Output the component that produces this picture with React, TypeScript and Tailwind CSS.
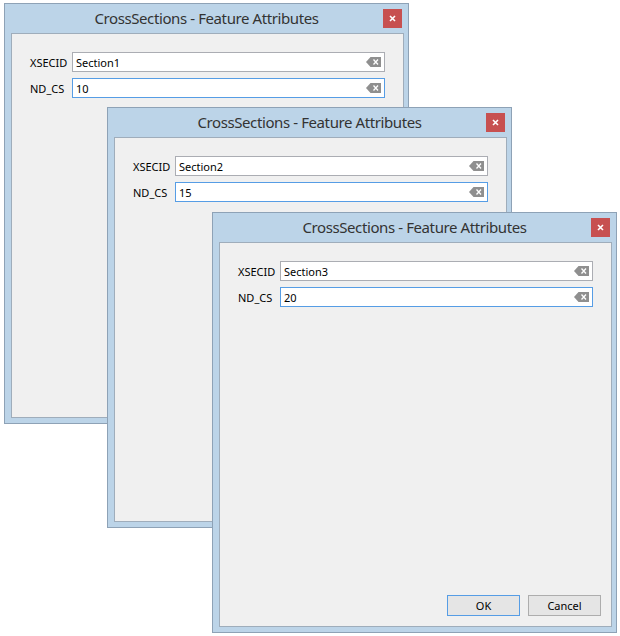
import React from "react";

const font = { fontFamily: '"Noto Sans", "Open Sans", sans-serif' };

function ClearIcon() {
  return (
    <svg width="15" height="10" viewBox="0 0 15 10" className="shrink-0">
      <path d="M4.5 0 H15 V10 H4.5 L0 5 Z" fill="#8f8f8f" />
      <path d="M7.5 2.5 L12 7.5 M12 2.5 L7.5 7.5" stroke="#ffffff" strokeWidth="1.3" />
    </svg>
  );
}

function Field({ label, value, focused }: { label: string; value: string; focused?: boolean }) {
  return (
    <>
      <div className="text-[11px] text-black leading-none">{label}</div>
      <div
        className={
          "h-[20px] bg-white border flex items-center justify-between pl-[3px] pr-[3px] " +
          (focused ? "border-[#569de5]" : "border-[#abadb3]")
        }
      >
        <span className="text-[11px] text-black leading-none">{value}</span>
        <ClearIcon />
      </div>
    </>
  );
}

function Dialog({ pos, section, nd }: { pos: string; section: string; nd: string }) {
  return (
    <div
      className={
        "absolute w-[405px] h-[421px] flex flex-col border border-[#8ea2b6] bg-[#bcd4e8] pl-[6px] pr-[4px] pb-[5px] " +
        pos
      }
      style={font}
    >
      <div className="relative h-[29px] flex items-center justify-center">
        <span className="text-[15px] tracking-[-0.4px] text-[#333333] leading-none pr-[2px]">
          CrossSections - Feature Attributes
        </span>
        <div className="absolute right-[2px] top-[5px] w-[19px] h-[19px] bg-[#c75050] flex items-center justify-center">
          <svg width="7" height="7" viewBox="0 0 7 7">
            <path d="M1 1 L6 6 M6 1 L1 6" stroke="#ffffff" strokeWidth="1.6" />
          </svg>
        </div>
      </div>
      <div className="flex-1 flex flex-col border border-[#9fadbb] bg-[#f0f0f0] px-[10px] pb-[10px]">
        <div className="grid grid-cols-[42px_1fr] gap-y-[6px] items-center pt-[18px] px-[8px]">
          <Field label="XSECID" value={section} />
          <Field label="ND_CS" value={nd} focused />
        </div>
        <div className="mt-auto flex justify-end gap-[8px]">
          <button className="w-[73px] h-[21px] border border-[#569de5] bg-[#e5e5e5] text-[11px] text-black leading-none">
            OK
          </button>
          <button className="w-[73px] h-[21px] border border-[#adadad] bg-[#e5e5e5] text-[11px] text-black leading-none">
            Cancel
          </button>
        </div>
      </div>
    </div>
  );
}

export default function App() {
  return (
    <div className="relative w-[620px] h-[636px] bg-white overflow-hidden">
      <Dialog pos="left-[4px] top-[3px]" section="Section1" nd="10" />
      <Dialog pos="left-[107px] top-[107px]" section="Section2" nd="15" />
      <Dialog pos="left-[212px] top-[212px]" section="Section3" nd="20" />
    </div>
  );
}
